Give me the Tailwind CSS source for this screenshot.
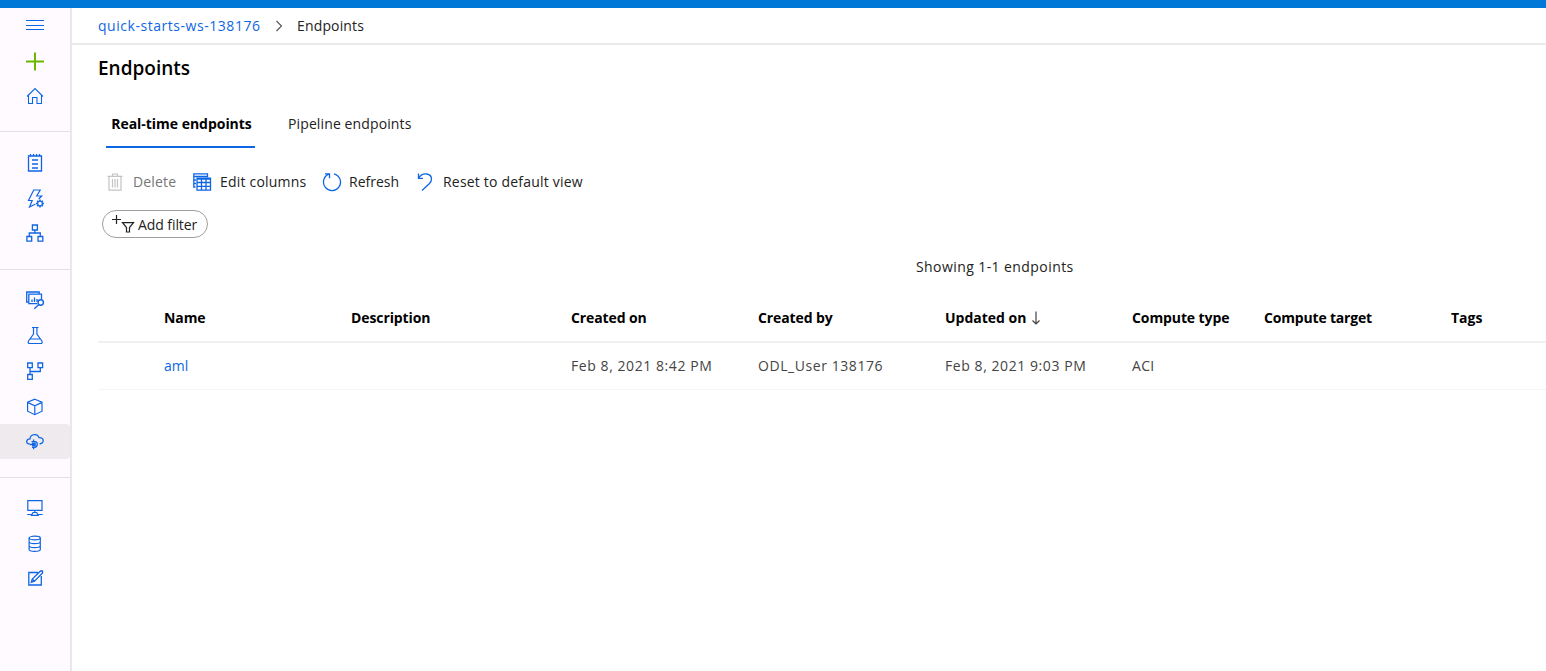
<!DOCTYPE html>
<html lang="en">
<head>
<meta charset="utf-8">
<title>Endpoints</title>
<script src="https://cdn.jsdelivr.net/npm/@tailwindcss/browser@4"></script>
</head>
<body class="h-[671px] overflow-hidden bg-white font-['Open_Sans','Noto_Sans',sans-serif] text-[14px] leading-5 text-[#222] whitespace-nowrap">
<div class="flex h-full flex-col">
  <div class="h-2 shrink-0 bg-[#0078d7]"></div>
  <div class="flex min-h-0 flex-1">
    <nav class="flex w-[72px] shrink-0 flex-col border-r-2 border-[#eae8ea] bg-[#fefaff] text-[#0f66e4]">
      <div class="flex h-[124px] flex-col border-b border-[#e2e0e2]">
        <a class="flex h-[34px] items-center justify-center"><svg class="size-5" viewBox="0 0 20 20" fill="none" stroke="currentColor" stroke-width="1.2"><path d="M1 5.5h18M1 10.5h18M1 14.5h18"/></svg></a>
        <a class="flex h-[37px] items-center justify-center"><svg class="size-5" viewBox="0 0 20 20" fill="none" stroke="#6bb700" stroke-width="2"><path d="M1 10.500h18M10 1.500v18"/></svg></a>
        <a class="flex h-[34px] items-center justify-center"><svg class="size-5" viewBox="0 0 20 20" fill="none" stroke="currentColor" stroke-width="1.1"><path d="M2 10.5 10 2.5l8 8M3.5 9v8.5h4v-6h4.500v6h4.500V9"/></svg></a>
      </div>
      <div class="flex h-[138px] flex-col border-b border-[#e2e0e2] pt-[13px]">
        <a class="flex h-[35px] items-center justify-center"><svg class="size-5" viewBox="0 0 20 20" fill="none" stroke="currentColor" stroke-width="1.3"><path d="M3.5 3h13v15h-13zM5.5 1v2M8.5 1v2M11.5 1v2M14.5 1v2M7 7h6M7 11h6M7 15h6"/></svg></a>
        <a class="flex h-[35px] items-center justify-center"><svg class="size-5" viewBox="0 0 20 20" fill="none" stroke="currentColor" stroke-width="1.2"><path d="M10.5 16 4.5 19l2.7-6.5H3.5L8.7 2h6.5l-3.5 6h5l-3 3"/><circle cx="15" cy="15.5" r="2.4"/><path stroke-width="1.5" d="M15 11.5v1.5M15 18v1.5M11 15.5h1.5M17.5 15.5H19M12.2 12.7l1 1M16.8 17.3l1 1M17.8 12.7l-1 1M13.2 17.3l-1 1"/></svg></a>
        <a class="flex h-[35px] items-center justify-center"><svg class="size-5" viewBox="0 0 20 20" fill="none" stroke="currentColor" stroke-width="1.3"><path d="M7.4 2h5v5h-5zM1.9 13.5h4.8v4.6H1.9zM13 13.5h4.8v4.6H13zM9.9 7v3M4.3 13.5V10h11v3.5"/></svg></a>
      </div>
      <div class="flex h-[208px] flex-col border-b border-[#e2e0e2] pt-3">
        <a class="flex h-[35px] items-center justify-center"><svg class="size-5" viewBox="0 0 20 20" fill="none" stroke="currentColor" stroke-width="1.3"><path d="M3 12H1.7V2h12.5v2M12 13.6H3.8V4.2h12.7V9M7 12V9.5M9.5 12V7.5M12 12V9"/><circle cx="15.7" cy="12.5" r="2.7" stroke-width="1.4"/><path d="m13.8 14.5-4.5 4.3"/></svg></a>
        <a class="flex h-9 items-center justify-center"><svg class="size-5" viewBox="0 0 20 20" fill="none" stroke="currentColor" stroke-width="1.2"><path d="M7 2.500h6.500M8.500 3v6l-5 7c-.7 1.200-.2 2.500 1 2.500h11.400c1.200 0 1.700-1.300 1-2.500l-5-7V3M5.200 14h9.800"/></svg></a>
        <a class="flex h-9 items-center justify-center"><svg class="size-5" viewBox="0 0 20 20" fill="none" stroke="currentColor" stroke-width="1.3"><path d="M2.7 2h4.6v4.6H2.7zM13 2h4.6v4.6H13zM2.7 13.5h4.6v4.800H2.700zM5 6.600v6.900M5 10.500h10.300V6.600"/></svg></a>
        <a class="flex h-[35px] items-center justify-center"><svg class="size-5" viewBox="0 0 20 20" fill="none" stroke="currentColor" stroke-width="1.2"><path d="m9.800 2.200 7.200 3v9l-7.200 3.500-7.200-3.500v-9zM2.600 5.400l7.200 3.400L17 5.400M9.800 8.800v8.900"/></svg></a>
        <a class="flex h-[35px] items-center justify-center rounded-r-sm bg-[#eeeaee]"><svg class="size-5" viewBox="0 0 20 20" fill="none" stroke="currentColor" stroke-width="1.300"><path d="M4.800 12C.5 12 .7 7 5 6.800c.600-5 7.500-5.500 9-1.200 5.500-.2 5.500 6.200.5 6.200M6.500 9.700h4c2.500.6 2.500 5.300-1 5.600H7M5 12.500h3M8.600 7.500v2M8.600 15.300v2"/><path fill="currentColor" stroke="none" d="M7 10.500h3.800v4H7z"/></svg></a>
      </div>
      <div class="flex flex-col pt-3">
        <a class="flex h-9 items-center justify-center"><svg class="size-5" viewBox="0 0 20 20" fill="none" stroke="currentColor" stroke-width="1.2"><path d="M2.800 2.700h14.200v9.600H2.800zM9.800 12.300v2.200M2.200 16.500h4.300M13.200 16.500h4.500M6.500 17.300l1.500-2.800h3.700l1.500 2.800z"/></svg></a>
        <a class="flex h-9 items-center justify-center"><svg class="size-5" viewBox="0 0 20 20" fill="none" stroke="currentColor" stroke-width="1.200"><ellipse cx="9.700" cy="4" rx="5.600" ry="1.800"/><path d="M4.100 4v11.500c0 2.500 11.200 2.500 11.200 0V4M4.100 7.800c0 2.500 11.200 2.500 11.200 0M4.100 11.700c0 2.500 11.200 2.500 11.200 0"/></svg></a>
        <a class="flex h-[34px] items-center justify-center"><svg class="size-5" viewBox="0 0 20 20" fill="none" stroke="currentColor" stroke-width="1.300"><path d="M13 3.500H3.800V16h12.500V7M6.300 13.300l1-3.300 8.200-8h2v2l-8 8.200zM7.500 10.300l2 2"/></svg></a>
      </div>
    </nav>
    <main class="flex min-w-0 flex-1 flex-col">
      <div class="flex h-[37px] shrink-0 items-center border-b-2 border-[#ebebeb] pl-[26px]">
        <a class="w-[163px] tracking-[0.54px] text-[#0f66e4]">quick-starts-ws-138176</a>
        <svg class="ml-[13px] mr-[13px] h-3 w-2.5" viewBox="0 0 10 12" fill="none" stroke="#555" stroke-width="1.100"><path d="m2.500 1 5 5-5 5"/></svg>
        <span class="tracking-[0.15px]">Endpoints</span>
      </div>
      <h1 class="mt-[11px] ml-[26px] text-[19px] leading-6 font-semibold text-black">Endpoints</h1>
      <div class="mt-[22px] ml-[34px] flex h-[46px]">
        <div class="flex w-[149px] items-center justify-center border-b-2 border-[#0f66e4] pl-0.5 font-bold tracking-[-0.03px] text-black">Real-time endpoints</div>
        <div class="ml-[33px] flex items-center border-b-2 border-transparent tracking-[0.12px]">Pipeline endpoints</div>
      </div>
      <div class="mt-6 ml-[33px] flex h-5 items-center">
        <svg class="size-5" viewBox="0 0 20 20" fill="none" stroke="#c4c4c4" stroke-width="1.200"><path d="M2.500 4.300h15M7.500 4V2h5v2M4 4.500v13.700h12V4.500M7.500 7v8.500M10 7v8.500M12.500 7v8.500"/></svg>
        <span class="ml-2 w-[43px] tracking-[0.15px] text-[#767676]">Delete</span>
        <svg class="ml-4 size-5" viewBox="0 0 20 20" fill="none" stroke="#0f66e4" stroke-width="1.300"><path d="M3.500 15H1.800V1.800h13.700v3.700M2 4.500h13.500M2 8h2M2 11.500h2"/><path d="M5 6.200h13.500v12H5zM5 7h13.500M5 10.500h13.500M5 14.300h13.500M9.500 7v11M14 7v11"/></svg>
        <span class="ml-2 w-[87px] tracking-[0.2px]">Edit columns</span>
        <svg class="ml-[15px] size-5" viewBox="0 0 20 20" fill="none" stroke="#0f66e4" stroke-width="1.300"><path d="M12 1.800a8.500 8.500 0 1 1-5 .3M3 1.800h4.500v4.500"/></svg>
        <span class="ml-[7px] w-[50px]">Refresh</span>
        <svg class="ml-4 size-5" viewBox="0 0 20 20" fill="none" stroke="#0f66e4" stroke-width="1.300"><path d="M3.500 1.500V6.300H8M3.500 6C8-.5 16.500 1.500 16.500 7c0 2-.8 3.200-2 4.500L7 18.500"/></svg>
        <span class="ml-2 tracking-[0.2px]">Reset to default view</span>
      </div>
      <div class="mt-[18px] ml-[30px] flex h-7 w-[106px] items-center rounded-full border border-[#a19f9d] pl-2">
        <svg class="h-5 w-6" viewBox="0 0 24 20" fill="none" stroke="#222" stroke-width="1.200"><path d="M1 5.500h9M5.500 1v9M11.500 8.700h11L18.500 13.500V18h-3v-4.500z"/></svg>
        <span class="ml-[3px] pt-0.5 tracking-[-0.08px]">Add filter</span>
      </div>
      <div class="mt-[19px] ml-[844px] tracking-[0.42px]">Showing 1-1 endpoints</div>
      <div class="mt-4 ml-[26px] grid h-[50px] grid-cols-[66px_187px_220px_187px_187px_187px_132px_187px_121px] items-center border-b-2 border-[#f0f0f0] pt-px font-bold tracking-[-0.1px] text-black">
        <span></span><span>Name</span><span>Description</span><span>Created on</span><span>Created by</span>
        <div class="flex items-center"><span class="tracking-normal">Updated on</span><svg class="ml-1 h-4 w-3" viewBox="0 0 12 16" fill="none" stroke="#444" stroke-width="1.200"><path d="M6 1.500v12.500M2.500 10.500 6 14l3.500-3.500"/></svg></div>
        <span>Compute type</span><span class="tracking-[-0.18px]">Compute target</span><span class="tracking-normal">Tags</span>
      </div>
      <div class="ml-[26px] grid h-[47px] grid-cols-[66px_187px_220px_187px_187px_187px_132px_187px_121px] items-center border-b border-[#f5f5f5] text-[#444] tracking-[0.57px]">
        <span></span><a class="tracking-normal text-[#0f66e4]">aml</a><span></span><span>Feb 8, 2021 8:42 PM</span><span>ODL_User 138176</span><span>Feb 8, 2021 9:03 PM</span><span class="tracking-[0.3px]">ACI</span><span></span><span></span>
      </div>
    </main>
  </div>
</div>
</body>
</html>
